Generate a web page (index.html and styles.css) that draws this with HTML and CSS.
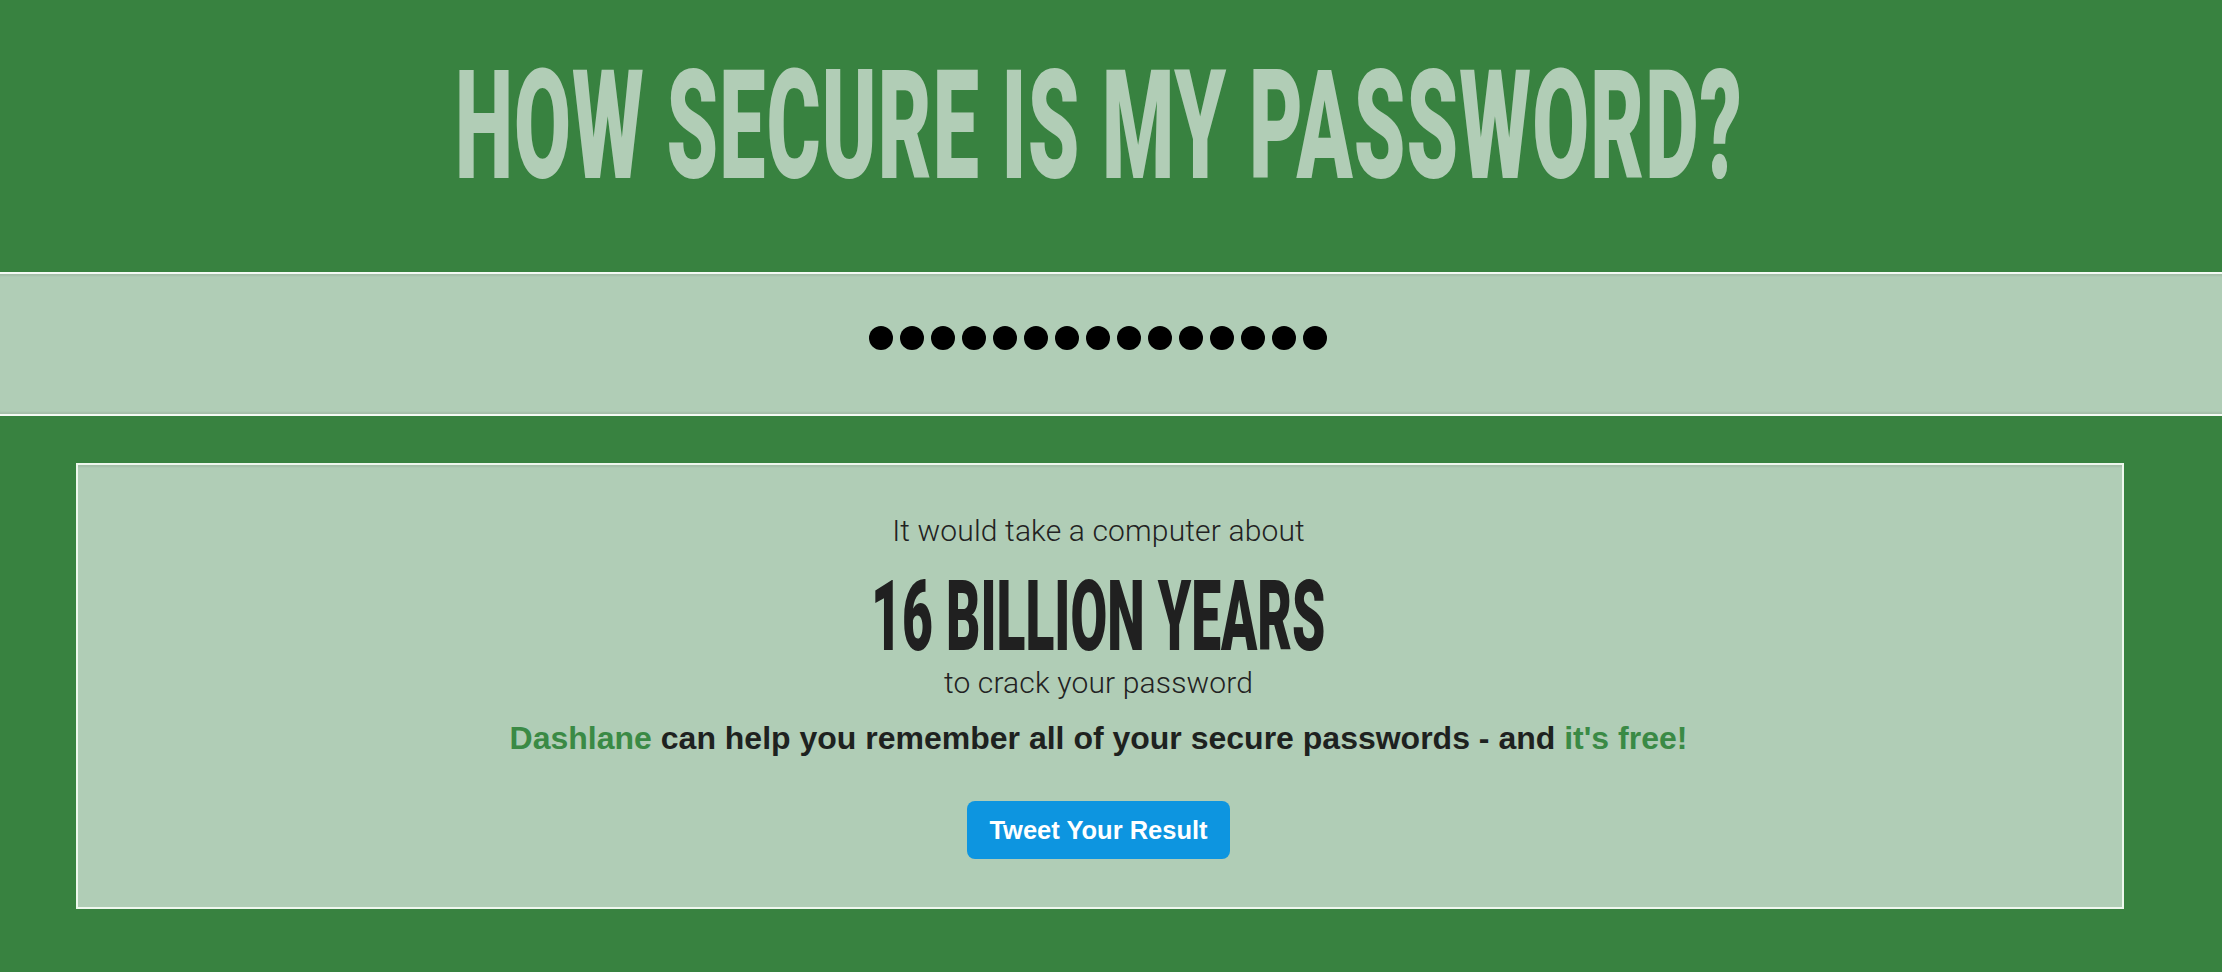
FILE: index.html
```html
<!DOCTYPE html>
<html lang="en">
<head>
<meta charset="utf-8">
<title>How Secure Is My Password?</title>
<link rel="stylesheet" href="styles.css">
</head>
<body>
<header class="header">
  <h1 class="title"><span class="title-text">HOW SECURE IS MY PASSWORD?</span></h1>
</header>
<section class="band">
  <div class="dots" aria-label="password">
    <span class="dot"></span><span class="dot"></span><span class="dot"></span><span class="dot"></span><span class="dot"></span>
    <span class="dot"></span><span class="dot"></span><span class="dot"></span><span class="dot"></span><span class="dot"></span>
    <span class="dot"></span><span class="dot"></span><span class="dot"></span><span class="dot"></span><span class="dot"></span>
  </div>
</section>
<main class="main">
  <div class="result">
    <p class="lead">It would take a computer about</p>
    <p class="time"><span class="time-text">16 BILLION YEARS</span></p>
    <p class="lead lead-after">to crack your password</p>
    <p class="pitch"><span class="green">Dashlane</span> can help you remember all of your secure passwords - and <span class="green">it's free!</span></p>
    <button class="tweet">Tweet Your Result</button>
  </div>
</main>
</body>
</html>
```
FILE: styles.css
```css
html, body {
  margin: 0;
  padding: 0;
}
body {
  background: #388240;
  font-family: "Liberation Sans", Arial, sans-serif;
  width: 2222px;
  height: 972px;
  overflow: hidden;
}
.header {
  height: 272px;
  box-sizing: border-box;
  padding: 50px 24px 0 0;
  display: flex;
  justify-content: center;
}
.title {
  margin: 0;
  font-family: Roboto, sans-serif;
  font-weight: 900;
  font-size: 152px;
  line-height: 1;
  color: #b1cdb6;
  white-space: nowrap;
}
.title-text {
  display: inline-block;
  transform: scaleX(0.543);
  transform-origin: center;
  letter-spacing: 2px;
}
.band {
  background: #b0cdb6;
  border-top: 2px solid #f4faf4;
  border-bottom: 2px solid #f4faf4;
  box-shadow: inset 0 3px 2px -1px rgba(0,0,0,0.07), inset 0 -3px 2px -1px rgba(0,0,0,0.07);
  display: flex;
  justify-content: center;
  align-items: center;
  padding: 0 26px 13px 0;
  box-sizing: border-box;
  height: 144px;
}
.dots {
  display: flex;
  gap: 7px;
}
.dot {
  width: 24px;
  height: 24px;
  border-radius: 50%;
  background: #000;
}
.main {
  padding: 47px 98px 0 76px;
}
.result {
  background: #b0cdb6;
  border: 2px solid #eef7ee;
  box-shadow: inset 0 3px 2px -1px rgba(0,0,0,0.07);
  height: 446px;
  box-sizing: border-box;
  display: flex;
  flex-direction: column;
  align-items: center;
  padding: 51px 3px 0 0;
  color: #222;
}
.result p {
  margin: 0;
  line-height: 1;
  white-space: nowrap;
}
.lead {
  font-family: Roboto, sans-serif;
  font-weight: 300;
  font-size: 30px;
  letter-spacing: 0.15px;
  color: #222;
}
.time {
  margin-top: 21px !important;
  font-family: Roboto, sans-serif;
  font-weight: 900;
  font-size: 99px;
  color: #202020;
}
.time-text {
  display: inline-block;
  transform: scaleX(0.538);
  transform-origin: center;
}
.lead-after {
  margin-top: 2px !important;
}
.pitch {
  margin-top: 24px !important;
  font-family: "Liberation Sans", Arial, sans-serif;
  font-weight: 700;
  font-size: 32px;
  color: #1e221f;
}
.green {
  color: #3a8a45;
}
.tweet {
  margin-top: 47px;
  height: 58px;
  padding: 0 22px;
  border: none;
  border-radius: 8px;
  background: #0d95e0;
  color: #fff;
  font-family: "Liberation Sans", Arial, sans-serif;
  font-weight: 700;
  font-size: 25.5px;
  line-height: 58px;
  cursor: pointer;
}
```
